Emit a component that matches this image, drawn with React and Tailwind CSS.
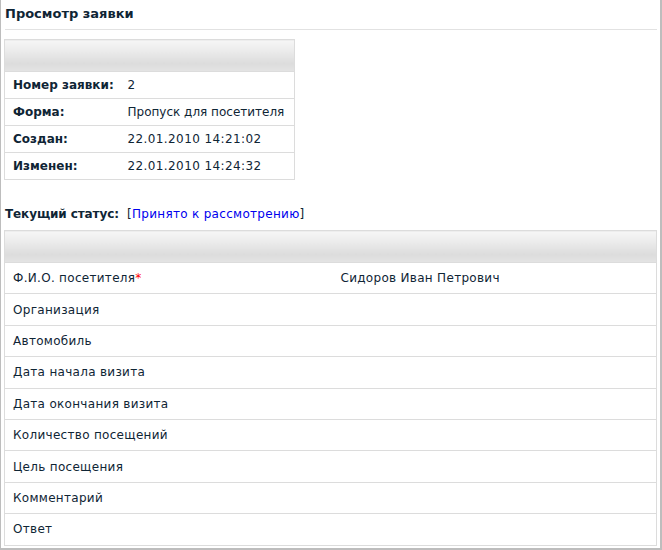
import React from 'react';

const info = [
  { label: 'Номер заявки:', value: '2' },
  { label: 'Форма:', value: 'Пропуск для посетителя' },
  { label: 'Создан:', value: '22.01.2010 14:21:02', digits: true },
  { label: 'Изменен:', value: '22.01.2010 14:24:32', digits: true },
];

const fields = [
  { label: 'Ф.И.О. посетителя', required: true, value: 'Сидоров Иван Петрович' },
  { label: 'Организация' },
  { label: 'Автомобиль' },
  { label: 'Дата начала визита' },
  { label: 'Дата окончания визита' },
  { label: 'Количество посещений' },
  { label: 'Цель посещения' },
  { label: 'Комментарий' },
  { label: 'Ответ' },
];

const headBg = 'bg-[linear-gradient(to_bottom,#f6f6f6_0%,#e9e9e9_40%,#dcdcdc_75%,#e4e4e4_100%)]';

const App = () => {
  return (
    <div className="w-[662px] h-[550px] bg-white border-l border-r-2 border-b-2 border-[#bdbdbd] text-[#0f2535] font-['DejaVu_Sans',sans-serif] text-[12px]">
      <div className="px-[3px]">
        {/* page title */}
        <div className="ml-[1px] h-[30px] pt-[6px] border-b border-[#e2e2e2] font-bold text-[13px] leading-[16px]">
          Просмотр заявки
        </div>

        {/* request info */}
        <table className="mt-[9px] w-[291px] border-collapse border border-[#dcdcdc]">
          <thead>
            <tr>
              <th colSpan={2} className={`h-[32px] p-0 border-b border-[#dcdcdc] ${headBg}`}></th>
            </tr>
          </thead>
          <tbody>
            {info.map((row, i) => (
              <tr key={i} className="h-[27px] border-b border-[#dcdcdc]">
                <td className="w-[115px] pl-[8px] p-0 font-bold">{row.label}</td>
                <td className={row.digits ? 'pl-[8px] p-0 tracking-[0.4px]' : 'pl-[8px] p-0'}>{row.value}</td>
              </tr>
            ))}
          </tbody>
        </table>

        {/* current status */}
        <div className="mt-[26px] ml-[1px] flex h-[15px] items-center">
          <span className="w-[122px] font-bold tracking-[-0.1px]">Текущий статус:</span>
          <span className="tracking-[0.3px]">
            [<a href="#" className="text-[#0000ee]">Принято к рассмотрению</a>]
          </span>
        </div>

        {/* form fields */}
        <table className="mt-[9px] w-full border-collapse border border-[#dcdcdc]">
          <thead>
            <tr>
              <th colSpan={2} className={`h-[32px] p-0 border-b border-[#dcdcdc] ${headBg}`}></th>
            </tr>
          </thead>
          <tbody>
            {fields.map((f, i) => (
              <tr key={i} className="h-[31.4px] border-b border-[#dcdcdc]">
                <td className="w-[328px] pl-[8px] p-0 tracking-[0.3px]">
                  {f.label}
                  {f.required && <span className="text-[#ff0000]">*</span>}
                </td>
                <td className="pl-[8px] p-0 tracking-[0.3px]">{f.value}</td>
              </tr>
            ))}
          </tbody>
        </table>
      </div>
    </div>
  );
};

export default App;
